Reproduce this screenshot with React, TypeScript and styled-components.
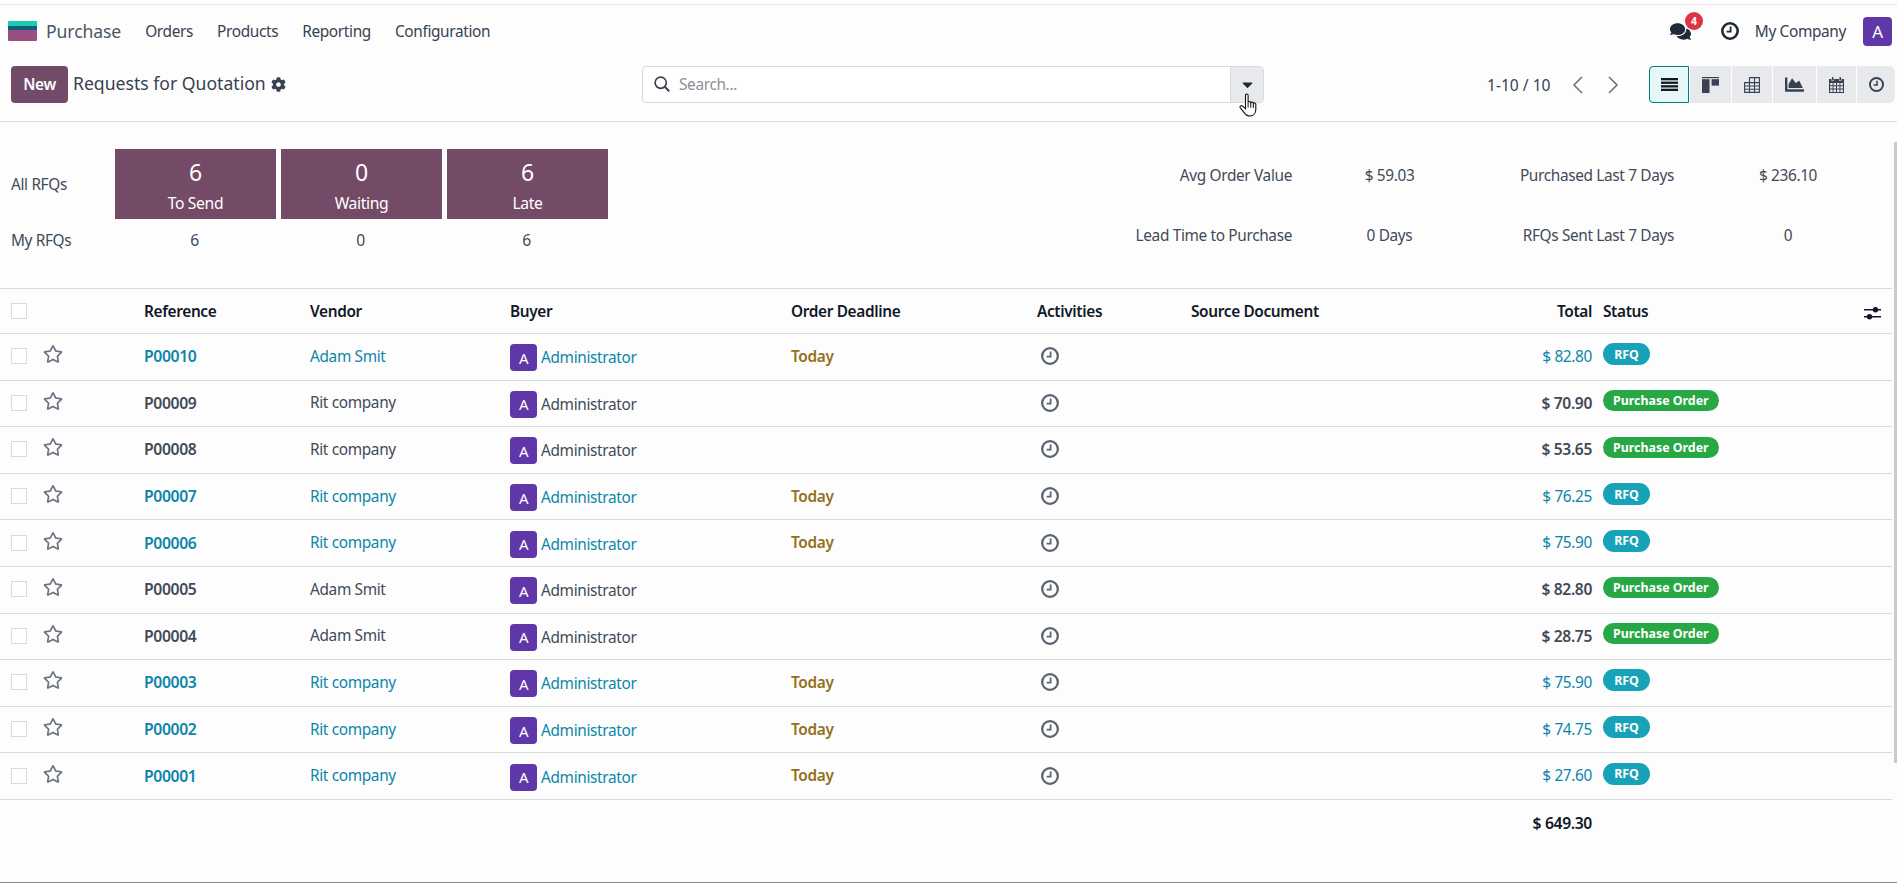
import * as React from "react";
import styled, { createGlobalStyle } from "styled-components";
import { FaCaretDown, FaChartArea, FaCog, FaComments, FaRegStar } from "react-icons/fa";

const Global = createGlobalStyle`
  html, body { margin: 0; padding: 0; background: #fdfdfd; }
  * { box-sizing: border-box; }
`;

const Page = styled.div`
  position: relative;
  width: 1897px;
  height: 883px;
  overflow: hidden;
  background: #fdfdfd;
  color: #414a58;
  font-family: "Noto Sans", "Open Sans", sans-serif;
  font-size: 15.4px;
  letter-spacing: -0.35px;
  border-bottom: 1px solid #8a8a8a;
`;

const TopStrip = styled.div`
  height: 5px;
  border-bottom: 1px solid #e3e5e8;
`;

const Scrollbar = styled.div`
  position: absolute;
  right: 0;
  top: 142px;
  width: 3px;
  height: 621px;
  background: #c9cace;
`;

const Nav = styled.nav`
  height: 54px;
  padding: 0 5px 2px 8px;
  display: flex;
  align-items: center;
  gap: 24px;
`;

const Brand = styled.div`
  display: flex;
  align-items: center;
  gap: 9px;
  font-size: 17.6px;
  letter-spacing: -0.1px;
  color: #4b5563;
`;

const NavLink = styled.span`
  color: #374151;
`;

const NavRight = styled.div`
  margin-left: auto;
  display: flex;
  align-items: center;
`;

const ChatWrap = styled.div`
  position: relative;
  width: 21px;
  height: 21px;
  margin-right: 30px;
  color: #1f2937;
  display: flex;
  align-items: center;
`;

const ChatBadge = styled.span`
  position: absolute;
  left: 15px;
  top: -9px;
  width: 18px;
  height: 18px;
  border-radius: 50%;
  background: #dc3545;
  color: #fff;
  font-size: 10.5px;
  font-weight: 700;
  display: flex;
  align-items: center;
  justify-content: center;
`;

const NavClock = styled.span`
  display: flex;
  color: #1f2937;
`;

const Company = styled.span`
  margin: 0 17px 0 16px;
  color: #374151;
`;

const Avatar = styled.span<{ $size: number }>`
  width: ${(p) => p.$size}px;
  height: ${(p) => p.$size}px;
  flex: none;
  border-radius: 4px;
  background: #5f37a8;
  color: #fff;
  display: inline-flex;
  align-items: center;
  justify-content: center;
  font-size: ${(p) => (p.$size > 28 ? 17 : 15)}px;
`;

const ControlPanel = styled.div`
  height: 63px;
  padding: 7px 0 0 11px;
  display: flex;
  align-items: flex-start;
  border-bottom: 1px solid #d8dadd;
`;

const LeftTools = styled.div`
  width: 631px;
  display: flex;
  align-items: center;
  height: 37px;
`;

const NewButton = styled.button`
  width: 57px;
  height: 37px;
  border: 0;
  border-radius: 4px;
  background: #714b67;
  color: #fff;
  font: 600 15.4px "Noto Sans", sans-serif;
  letter-spacing: -0.35px;
  padding: 0;
`;

const Title = styled.span`
  margin-left: 5px;
  font-size: 17.6px;
  letter-spacing: 0;
  line-height: 34px;
  height: 37px;
  color: #374151;
`;

const Gear = styled.span`
  margin-left: 5px;
  display: flex;
  color: #374151;
  font-size: 15px;
`;

const SearchBar = styled.div`
  width: 622px;
  height: 37px;
  display: flex;
  align-items: stretch;
  border: 1px solid #d8dadd;
  border-radius: 4px;
  background: #fff;
`;

const SearchField = styled.div`
  flex: 1;
  display: flex;
  align-items: center;
  padding: 0 0 1px 11px;
  gap: 9px;
  color: #374151;
`;

const Placeholder = styled.span`
  color: #8b9098;
`;

const SearchCaret = styled.div`
  position: relative;
  width: 33px;
  background: #e7e9ed;
  border-left: 1px solid #d8dadd;
  border-radius: 0 3px 3px 0;
  display: flex;
  align-items: center;
  justify-content: center;
  color: #1f2937;
  font-size: 17px;
`;

const HandCursor = styled.svg`
  position: absolute;
  left: 8px;
  top: 26px;
  width: 20px;
  height: 25px;
`;

const Pager = styled.div`
  margin-left: 223px;
  width: 62px;
  height: 37px;
  display: flex;
  align-items: center;
  white-space: nowrap;
  font-size: 15.6px;
  letter-spacing: 0;
  color: #374151;
`;

const PagerArrows = styled.div`
  display: flex;
  margin: 0 18px 0 10px;
  height: 37px;
`;

const PagerArrow = styled.span`
  width: 36px;
  display: flex;
  align-items: center;
  justify-content: center;
  color: #6b7280;
`;

const ViewGroup = styled.div`
  display: flex;
  gap: 1px;
  height: 37px;
`;

const ViewButton = styled.span<{ $w: number; $active?: boolean; $last?: boolean }>`
  width: ${(p) => p.$w}px;
  display: flex;
  align-items: center;
  justify-content: center;
  background: ${(p) => (p.$active ? "#e5f7f7" : "#e7e9ed")};
  border: ${(p) => (p.$active ? "1px solid #017e84" : "0")};
  border-radius: ${(p) => (p.$active ? "4px 0 0 4px" : p.$last ? "0 6px 6px 0" : "0")};
  color: ${(p) => (p.$active ? "#111827" : "#374151")};
`;

const Dashboard = styled.section`
  height: 166px;
  padding: 23px 5px 0 11px;
  display: flex;
  justify-content: space-between;
`;

const KpiGrid = styled.div`
  margin-top: 4px;
  display: grid;
  grid-template-columns: 99px 161px 161px 161px;
  grid-template-rows: 70px 42px;
  column-gap: 5px;
  align-items: center;
`;

const Kpi = styled.div`
  height: 70px;
  background: #744b67;
  color: #fff;
  display: flex;
  flex-direction: column;
  align-items: center;
  padding-top: 8px;
`;

const KpiNumber = styled.span`
  font-size: 23px;
  line-height: 31px;
`;

const KpiLabel = styled.span`
  font-size: 15.7px;
  line-height: 24px;
  margin-top: 3px;
`;

const KpiCount = styled.span`
  text-align: center;
  font-size: 15.7px;
  padding-right: 2px;
`;

const StatGrid = styled.div`
  display: grid;
  grid-template-columns: 331px 195px 187px 218px;
  grid-template-rows: 60px 60px;
  align-items: center;
  height: 120px;
`;

const StatLabel = styled.span`
  text-align: right;
`;

const StatValue = styled.span<{ $pad?: boolean }>`
  text-align: center;
  padding-left: ${(p) => (p.$pad ? 10 : 0)}px;
`;

const Table = styled.div`
  width: 1892px;
`;

const COLUMNS = "144px 166px 200px 281px 246px 154px 201px 200px 1fr";

const HeadRow = styled.div`
  position: relative;
  height: 46px;
  display: grid;
  grid-template-columns: ${COLUMNS};
  align-items: center;
  border-top: 1px solid #d8dadd;
  border-bottom: 1px solid #d8dadd;
  font-weight: 600;
  color: #111827;
`;

const BodyRow = styled.div<{ $todo: boolean }>`
  height: 46.6px;
  padding-bottom: 1px;
  display: grid;
  grid-template-columns: ${COLUMNS};
  align-items: center;
  border-bottom: 1px solid #d8dadd;
  color: ${(p) => (p.$todo ? "#0b86a8" : "#414a58")};
`;

const SelectCell = styled.div`
  padding-left: 11px;
  display: flex;
  align-items: center;
  gap: 16px;
`;

const Checkbox = styled.span`
  width: 16px;
  height: 16px;
  border: 1px solid #d8dadd;
  background: #fff;
  flex: none;
`;

const Star = styled.span`
  display: flex;
  color: #6b7280;
  font-size: 20px;
  padding-bottom: 4px;
`;

const RefCell = styled.span`
  font-weight: 600;
  font-size: 15.7px;
`;

const BuyerCell = styled.div`
  display: flex;
  align-items: center;
  gap: 4px;
  padding-top: 3px;
`;

const TodayText = styled.span`
  font-weight: 600;
  color: #94701a;
`;

const ClockCell = styled.span`
  display: flex;
  padding-left: 4px;
  color: #5b6470;
`;

const TotalCell = styled.span<{ $strong: boolean }>`
  text-align: right;
  font-weight: ${(p) => (p.$strong ? 600 : 400)};
  font-size: ${(p) => (p.$strong ? 15.6 : 15.4)}px;
`;

const HeadTotal = styled.span`
  text-align: right;
`;

const HeadStatus = styled.span`
  padding-left: 11px;
`;

const StatusCell = styled.div`
  padding: 0 0 4px 11px;
  display: flex;
`;

const Badge = styled.span<{ $state: "rfq" | "po" }>`
  height: ${(p) => (p.$state === "rfq" ? 22 : 21)}px;
  min-width: 47px;
  padding: 0 10px;
  border-radius: 11px;
  background: ${(p) => (p.$state === "rfq" ? "#17a2b8" : "#28a745")};
  color: #fff;
  font-size: 12.4px;
  letter-spacing: 0;
  font-weight: 700;
  display: flex;
  align-items: center;
  justify-content: center;
`;

const Adjust = styled.svg`
  position: absolute;
  left: 1864px;
  top: 17px;
  width: 17px;
  height: 14px;
`;

const FootRow = styled.div`
  display: grid;
  grid-template-columns: 1592px 1fr;
  height: 46px;
  align-items: center;
  font-weight: 600;
  color: #111827;
  font-size: 15.7px;
`;

const FootTotal = styled.span`
  text-align: right;
`;

const Logo = () => (
  <svg width="29" height="20" viewBox="0 0 29 20">
    <path d="M1 0h27a1 1 0 0 1 1 1v5H0V1a1 1 0 0 1 1-1z" fill="#1dc9b0" />
    <rect y="5" width="29" height="5" fill="#0d5f7a" />
    <path d="M0 9h29v10a1 1 0 0 1-1 1H1a1 1 0 0 1-1-1z" fill="#9a4f82" />
  </svg>
);

const Clock = ({ size, width = 2.3 }: { size: number; width?: number }) => (
  <svg width={size} height={size} viewBox="0 0 18 18" fill="none" stroke="currentColor">
    <circle cx="9" cy="9" r={9 - width / 2} strokeWidth={width} />
    <path d="M9.6 4.400v5.200H5.600" strokeWidth="1.800" />
  </svg>
);

const SearchIcon = () => (
  <svg width="16" height="16" viewBox="0 0 16 16" fill="none" stroke="currentColor" strokeWidth="1.700">
    <circle cx="6.700" cy="6.700" r="5.600" />
    <path d="M10.700 10.700 15.200 15.200" strokeWidth="2" />
  </svg>
);

const ChevronIcon = ({ dir }: { dir: "l" | "r" }) => (
  <svg width="11" height="20" viewBox="0 0 11 20" fill="none" stroke="currentColor" strokeWidth="1.600">
    <path d={dir === "l" ? "M10 2 2 10l8 8" : "M1 2l8 8-8 8"} />
  </svg>
);

const ListIcon = () => (
  <svg width="17" height="13" viewBox="0 0 17 13" fill="currentColor">
    <rect width="17" height="2.300" />
    <rect y="3.600" width="17" height="2.300" />
    <rect y="7.200" width="17" height="2.300" />
    <rect y="10.700" width="17" height="2.300" />
  </svg>
);

const KanbanIcon = () => (
  <svg width="17" height="16" viewBox="0 0 17 16" fill="currentColor">
    <rect width="17" height="1.200" />
    <rect y="2.200" width="7.500" height="13.800" />
    <rect x="9.600" y="2.200" width="7.400" height="6.400" />
  </svg>
);

const PivotIcon = () => (
  <svg width="16" height="16" viewBox="0 0 16 16" fill="none" stroke="currentColor" strokeWidth="1.100">
    <path d="M5.500.6h9.900v14.800H.6V5.600H15.400M5.500.6V15.400M10.500.6V15.400M.6 9H15.400M.6 12.200H15.400" />
  </svg>
);

const CalendarIcon = () => (
  <svg width="15" height="16" viewBox="0 0 15 16" fill="currentColor">
    <path
      fillRule="evenodd"
      d="M0 2h2.400v1.800h2.600V2h5v1.800h2.600V2H15v14H0zM1.100 6v2.200h2.500V6zm3.400 0v2.200h2.500V6zm3.500 0v2.200h2.500V6zm3.400 0v2.200h2.500V6zM1.100 9.200v2.200h2.500V9.200zm3.400 0v2.200h2.500V9.200zm3.500 0v2.200h2.500V9.200zm3.400 0v2.200h2.500V9.200zM1.100 12.400v2.500h2.500v-2.500zm3.400 0v2.500h2.500v-2.500zm3.500 0v2.500h2.500v-2.500zm3.400 0v2.500h2.500v-2.500z"
    />
    <rect x="2.900" width="1.700" height="3.400" rx=".8" />
    <rect x="10.400" width="1.700" height="3.400" rx=".8" />
  </svg>
);

type Row = { ref: string; vendor: string; total: string; todo: boolean };

const ROWS: Row[] = [
  { ref: "P00010", vendor: "Adam Smit", total: "$ 82.80", todo: true },
  { ref: "P00009", vendor: "Rit company", total: "$ 70.90", todo: false },
  { ref: "P00008", vendor: "Rit company", total: "$ 53.65", todo: false },
  { ref: "P00007", vendor: "Rit company", total: "$ 76.25", todo: true },
  { ref: "P00006", vendor: "Rit company", total: "$ 75.90", todo: true },
  { ref: "P00005", vendor: "Adam Smit", total: "$ 82.80", todo: false },
  { ref: "P00004", vendor: "Adam Smit", total: "$ 28.75", todo: false },
  { ref: "P00003", vendor: "Rit company", total: "$ 75.90", todo: true },
  { ref: "P00002", vendor: "Rit company", total: "$ 74.75", todo: true },
  { ref: "P00001", vendor: "Rit company", total: "$ 27.60", todo: true },
];

const App = (): JSX.Element => {
  return (
    <Page>
      <Global />
      <TopStrip />
      <Nav>
        <Brand>
          <Logo />
          Purchase
        </Brand>
        <NavLink>Orders</NavLink>
        <NavLink>Products</NavLink>
        <NavLink>Reporting</NavLink>
        <NavLink>Configuration</NavLink>
        <NavRight>
          <ChatWrap>
            <FaComments size={21} />
            <ChatBadge>4</ChatBadge>
          </ChatWrap>
          <NavClock>
            <Clock size={18} width={2.6} />
          </NavClock>
          <Company>My Company</Company>
          <Avatar $size={29}>A</Avatar>
        </NavRight>
      </Nav>

      <ControlPanel>
        <LeftTools>
          <NewButton>New</NewButton>
          <Title>Requests for Quotation</Title>
          <Gear>
            <FaCog />
          </Gear>
        </LeftTools>
        <SearchBar>
          <SearchField>
            <SearchIcon />
            <Placeholder>Search...</Placeholder>
          </SearchField>
          <SearchCaret>
            <FaCaretDown />
            <HandCursor viewBox="0 0 20 25">
              <path
                d="M6.500 2.200c0-1.600 2.600-1.600 2.600 0v7.200c.5-1.300 2.600-1.200 2.700.3.5-1 2.500-.8 2.600.6.6-.8 2.400-.5 2.400 1v5.200c0 3.400-2 6.500-5.600 6.500-3 0-4.400-1-6-3.400L1.300 14.800c-1-1.500 1-3 2.300-1.700l2.900 2.700z"
                fill="#fff"
                stroke="#111"
                strokeWidth="1.100"
              />
              <path d="M9.100 9.500v5M11.800 9.800v5M14.400 10.900v4" stroke="#111" strokeWidth="1" fill="none" />
            </HandCursor>
          </SearchCaret>
        </SearchBar>
        <Pager>1-10 / 10</Pager>
        <PagerArrows>
          <PagerArrow>
            <ChevronIcon dir="l" />
          </PagerArrow>
          <PagerArrow>
            <ChevronIcon dir="r" />
          </PagerArrow>
        </PagerArrows>
        <ViewGroup>
          <ViewButton $w={40} $active>
            <ListIcon />
          </ViewButton>
          <ViewButton $w={41}>
            <KanbanIcon />
          </ViewButton>
          <ViewButton $w={40}>
            <PivotIcon />
          </ViewButton>
          <ViewButton $w={43}>
            <FaChartArea size={19} />
          </ViewButton>
          <ViewButton $w={39}>
            <CalendarIcon />
          </ViewButton>
          <ViewButton $w={38} $last>
            <Clock size={15} />
          </ViewButton>
        </ViewGroup>
      </ControlPanel>

      <Dashboard>
        <KpiGrid>
          <span>All RFQs</span>
          <Kpi>
            <KpiNumber>6</KpiNumber>
            <KpiLabel>To Send</KpiLabel>
          </Kpi>
          <Kpi>
            <KpiNumber>0</KpiNumber>
            <KpiLabel>Waiting</KpiLabel>
          </Kpi>
          <Kpi>
            <KpiNumber>6</KpiNumber>
            <KpiLabel>Late</KpiLabel>
          </Kpi>
          <span>My RFQs</span>
          <KpiCount>6</KpiCount>
          <KpiCount>0</KpiCount>
          <KpiCount>6</KpiCount>
        </KpiGrid>
        <StatGrid>
          <StatLabel>Avg Order Value</StatLabel>
          <StatValue>$ 59.03</StatValue>
          <StatLabel>Purchased Last 7 Days</StatLabel>
          <StatValue $pad>$ 236.10</StatValue>
          <StatLabel>Lead Time to Purchase</StatLabel>
          <StatValue>0 Days</StatValue>
          <StatLabel>RFQs Sent Last 7 Days</StatLabel>
          <StatValue $pad>0</StatValue>
        </StatGrid>
      </Dashboard>

      <Table>
        <HeadRow>
          <SelectCell>
            <Checkbox />
          </SelectCell>
          <span>Reference</span>
          <span>Vendor</span>
          <span>Buyer</span>
          <span>Order Deadline</span>
          <span>Activities</span>
          <span>Source Document</span>
          <HeadTotal>Total</HeadTotal>
          <HeadStatus>Status</HeadStatus>
          <Adjust viewBox="0 0 17 14" fill="currentColor">
            <rect y="3" width="17" height="1.500" />
            <rect y="10" width="17" height="1.500" />
            <circle cx="11.500" cy="3.700" r="2.700" />
            <circle cx="5.500" cy="10.700" r="2.700" />
          </Adjust>
        </HeadRow>
        {ROWS.map((row) => (
          <BodyRow key={row.ref} $todo={row.todo}>
            <SelectCell>
              <Checkbox />
              <Star>
                <FaRegStar />
              </Star>
            </SelectCell>
            <RefCell>{row.ref}</RefCell>
            <span>{row.vendor}</span>
            <BuyerCell>
              <Avatar $size={27}>A</Avatar>
              Administrator
            </BuyerCell>
            <span>{row.todo && <TodayText>Today</TodayText>}</span>
            <ClockCell>
              <Clock size={18} />
            </ClockCell>
            <span />
            <TotalCell $strong={!row.todo}>{row.total}</TotalCell>
            <StatusCell>
              <Badge $state={row.todo ? "rfq" : "po"}>{row.todo ? "RFQ" : "Purchase Order"}</Badge>
            </StatusCell>
          </BodyRow>
        ))}
        <FootRow>
          <FootTotal>$ 649.30</FootTotal>
        </FootRow>
      </Table>
      <Scrollbar />
    </Page>
  );
};

export default App;
